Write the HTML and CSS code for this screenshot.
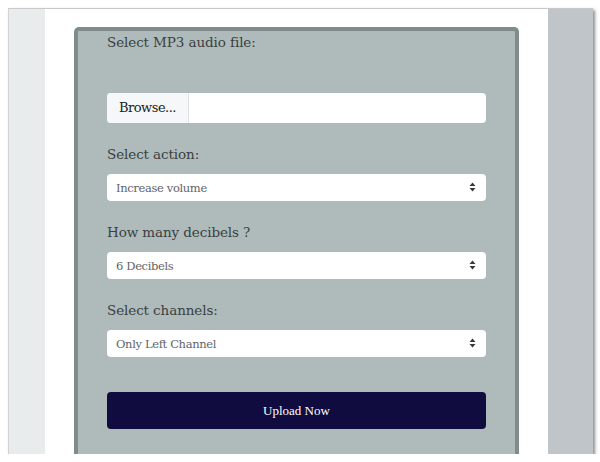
FILE: index.html
```html
<!DOCTYPE html>
<html>
<head>
	<title>MP3 Volume Booster</title>
	<link rel="stylesheet" href="styles.css">
</head>
<body>
	<div class="frame">
		<div class="side-left"></div>
		<div class="main">
			<form class="card">
				<label class="field-label first">Select MP3 audio file:</label>
				<div class="file-input">
					<span class="browse">Browse...</span>
					<span class="file-name"></span>
				</div>

				<label class="field-label" for="action">Select action:</label>
				<div class="select-wrap">
					<select id="action">
						<option>Increase volume</option>
						<option>Decrease volume</option>
					</select>
					<svg class="arrows" width="7" height="10" viewBox="0 0 7 10"><path d="M3.5 0.5 L6.5 4 H0.5 Z M3.5 9.5 L6.5 6 H0.5 Z" fill="#343a40"/></svg>
				</div>

				<label class="field-label" for="decibels">How many decibels ?</label>
				<div class="select-wrap">
					<select id="decibels">
						<option>6 Decibels</option>
						<option>3 Decibels</option>
					</select>
					<svg class="arrows" width="7" height="10" viewBox="0 0 7 10"><path d="M3.5 0.5 L6.5 4 H0.5 Z M3.5 9.5 L6.5 6 H0.5 Z" fill="#343a40"/></svg>
				</div>

				<label class="field-label" for="channels">Select channels:</label>
				<div class="select-wrap">
					<select id="channels">
						<option>Only Left Channel</option>
						<option>Only Right Channel</option>
						<option>Both Channels</option>
					</select>
					<svg class="arrows" width="7" height="10" viewBox="0 0 7 10"><path d="M3.5 0.5 L6.5 4 H0.5 Z M3.5 9.5 L6.5 6 H0.5 Z" fill="#343a40"/></svg>
				</div>

				<button type="submit">Upload Now</button>
			</form>
		</div>
		<div class="side-right"></div>
	</div>
</body>
</html>
```

FILE: styles.css
```css
body {
	margin: 0;
	background-color: white;
	font-family: "DejaVu Serif", serif;
}
.frame {
	display: flex;
	margin: 8px 0 0 8px;
	width: 584px;
	height: 445px;
	border-top: 1px solid #c9c9c9;
	border-left: 1px solid #d2d2d2;
	box-shadow: 2px 2px 3px rgba(0, 0, 0, 0.45);
	overflow: hidden;
}
.side-left {
	width: 36px;
	background-color: #e8eced;
}
.main {
	width: 503px;
	background-color: white;
	padding: 18px 0 0 29px;
	box-sizing: border-box;
}
.side-right {
	flex: 1;
	background-color: #bfc5c8;
}
.card {
	width: 445px;
	height: 460px;
	box-sizing: border-box;
	padding: 1px 29px 0;
	background-color: #afbbbb;
	border: 4px solid #7f8c8b;
	border-bottom: none;
	border-radius: 5px 5px 0 0;
}
.field-label {
	display: block;
	height: 20px;
	line-height: 20px;
	font-size: 13.5px;
	letter-spacing: -0.1px;
	color: #3a3f41;
	margin-bottom: 10px;
}
.field-label.first {
	margin-bottom: 41px;
}
.file-input {
	display: flex;
	height: 30px;
	background-color: white;
	border-radius: 4px;
	overflow: hidden;
	margin-bottom: 21px;
}
.browse {
	width: 81px;
	line-height: 30px;
	text-align: center;
	background-color: #f5f7f9;
	border-right: 1px solid #dde1e4;
	font-size: 13px;
	letter-spacing: -0.5px;
	color: #222;
}
.file-name {
	flex: 1;
}
.select-wrap {
	position: relative;
	margin-bottom: 21px;
}
select {
	display: block;
	width: 100%;
	height: 27px;
	padding: 0 9px;
	border: none;
	border-radius: 4px;
	background-color: white;
	font-family: "DejaVu Serif", serif;
	font-size: 11.5px;
	letter-spacing: -0.35px;
	color: #5f6468;
	-webkit-appearance: none;
	appearance: none;
}
.arrows {
	position: absolute;
	right: 10px;
	top: 8px;
}
button[type="submit"] {
	display: block;
	width: 100%;
	height: 37px;
	margin-top: 35px;
	background-color: #110c40;
	color: white;
	border: none;
	border-radius: 4px;
	font-family: "Liberation Serif", serif;
	font-size: 13px;
	cursor: pointer;
}
```
